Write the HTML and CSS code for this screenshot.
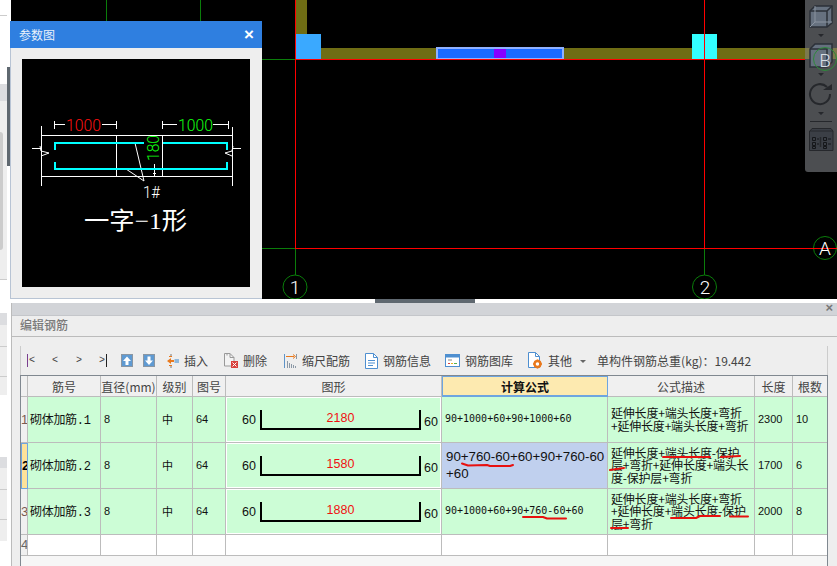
FILE: index.html
```html
<!DOCTYPE html>
<html lang="zh-CN">
<head>
<meta charset="utf-8">
<title>编辑钢筋</title>
<link rel="stylesheet" href="styles.css">
</head>
<body>
<div class="page">
  <aside class="strip">
    <div class="strip-a"></div>
    <div class="strip-b"></div>
    <div class="strip-band"></div>
    <div class="strip-c"><div class="strip-knob"></div></div>
    <div class="strip-d"></div>
    <div class="strip-band2"></div>
    <div class="strip-e"></div>
    <div class="strip-f"></div>
    <div class="strip-g"></div>
    <div class="strip-h"></div>
    <div class="strip-band2 strip-band3"></div>
    <div class="strip-e"></div>
    <div class="strip-f"></div>
    <div class="strip-i"></div>
    <div class="strip-thumb"></div>
  </aside>

  <main class="main">
    <svg class="canvas" viewBox="11 0 826 299" width="826" height="299">
      <rect x="11" y="0" width="826" height="299" fill="#000"/>
      <g stroke="#0a7d0a" fill="none">
        <path d="M106.500 0V21M200.500 0V21M262 59.500H295M262 248.500H295"/>
        <path d="M295.500 249V275M704.500 249V275"/>
        <circle cx="295" cy="287" r="12"/>
        <circle cx="704.500" cy="287" r="12"/>
        <circle cx="825" cy="248" r="11.500"/>
      </g>
      <rect x="296" y="0" width="11" height="34" fill="#6f6d14"/>
      <rect x="321" y="48" width="516" height="11" fill="#6f6d14"/>
      <rect x="296" y="34" width="25" height="25" fill="#3aa9ff"/>
      <rect x="692" y="34" width="25" height="25" fill="#33ffff"/>
      <rect x="437" y="48" width="126" height="11" fill="#1a6aff" stroke="#8fb0ff" stroke-width="2"/>
      <rect x="494" y="49" width="12" height="9" fill="#8800ff"/>
      <path d="M295.500 0V249M704.500 0V249M296 59.500H837M295 248.500H837" stroke="#ff0000" fill="none"/>
      <g class="axis-label" text-anchor="middle">
        <text x="295" y="294">1</text>
        <text x="705" y="294">2</text>
        <text x="825" y="255">A</text>
      </g>
      <path d="M805 0H837V172H808Q805 172 805 169Z" fill="#4c4e51"/>
      <rect x="805" y="48" width="32" height="11" fill="#7c7a4e"/>
      <g stroke="#2b3038" fill="#66717f" stroke-width="1.500">
        <path d="M810 11L815 6H832V23L827 27H810Z"/>
        <path d="M810 11H827V27M827 11L832 6" fill="none"/>
        <path d="M815 6V22H832M815 22L810 27" fill="none" stroke="#8a94a0" stroke-width="1"/>
        <path d="M810 49L815 44H832V62L827 67H810Z"/>
        <path d="M810 49H827V67" fill="none"/>
      </g>
      <g fill="#26282c">
        <path d="M818 34H824L821 37ZM818 73H824L821 76ZM818 112H824L821 115Z"/>
      </g>
      <path d="M830 94A10 10 0 1 1 827 87" fill="none" stroke="#26282c" stroke-width="2"/>
      <path d="M823 90H832V84Z" fill="#26282c"/>
      <path d="M810 121.500H832" stroke="#26282c"/>
      <g stroke="#26282c" fill="none">
        <path d="M810 131L812 128.500H831L833 131V150.500H809.500V131H833" fill="#3b3f46"/>
        <path d="M820.500 137V147" stroke-width="1.500"/>
        <path d="M812.500 137.500h3v3h-3zM812.500 142.500h3v3h-3zM812.500 146.500h3v2h-3zM823.500 137.500h3v3h-3zM823.500 142.500h3v3h-3zM823.500 146.500h3v2h-3zM817 139h2M817 144h2M828 139h3M828 144h3" stroke="#15171a"/>
      </g>
      <circle cx="825" cy="59" r="11.500" fill="none" stroke="#2d8a3a"/>
      <text class="axis-label axis-b" x="825" y="67" text-anchor="middle">B</text>
    </svg>

    <div class="divider"><div class="divider-handle"></div></div>

    <section class="editor">
      <div class="editor-bar"><span class="editor-close">×</span></div>
      <h2 class="editor-title">编辑钢筋</h2>

      <div class="toolbar">
        <div class="nav">
          <span class="nav-btn"><i class="nav-line"></i>&lt;</span>
          <span class="nav-btn">&lt;</span>
          <span class="nav-btn">&gt;</span>
          <span class="nav-btn">&gt;<i class="nav-line nav-line-dark"></i></span>
        </div>
        <svg class="ico-sq ico-up" viewBox="0 0 12 13" width="12" height="13"><rect x=".5" y=".5" width="11" height="12" fill="#5f9ad2" stroke="#8a96a2"/><path d="M6 2.500L10 7H7.500V11H4.500V7H2Z" fill="#fff"/></svg>
        <svg class="ico-sq ico-down" viewBox="0 0 12 13" width="12" height="13"><rect x=".5" y=".5" width="11" height="12" fill="#5f9ad2" stroke="#8a96a2"/><path d="M6 11L10 6.500H7.500V2.500H4.500V6.500H2Z" fill="#fff"/></svg>

        <span class="tool tool-insert">
          <svg viewBox="0 0 13 16" width="13" height="16"><path d="M5 1v3M5 12v3" stroke="#777" fill="none"/><path d="M1 8L5 5V7H8V9H5V11Z" fill="#e9791d"/><path d="M3 3.500H6M3 12.500H6" stroke="#e9791d"/><rect x="8.500" y="6" width="4.500" height="4" fill="#8fb8dc"/></svg>
          插入
        </span>
        <span class="tool tool-delete">
          <svg viewBox="0 0 15 17" width="15" height="17"><path d="M1.500 1.500H7L11 5.500V14H1.500Z" fill="#f3f3f3" stroke="#999"/><path d="M4 3.500V1.500M7 1.500V5.500H11" fill="none" stroke="#999"/><rect x="8" y="9" width="7" height="7" fill="#d9413c"/><path d="M9.500 10.500L13.500 14.500M13.500 10.500L9.500 14.500" stroke="#fff"/></svg>
          删除
        </span>
        <span class="tool tool-scale">
          <svg viewBox="0 0 14 16" width="14" height="16"><path d="M1.500 1V15" stroke="#5e93c8" fill="none"/><path d="M3 3.500H11" stroke="#e9791d"/><path d="M10 1.500L12.500 3.500L10 5.500" fill="none" stroke="#e9791d"/><path d="M13.500 1V6M4.500 8V15M6.500 10V15M8.500 11V15M10.500 12V15M12.500 13V15" stroke="#8b98a6"/></svg>
          缩尺配筋
        </span>
        <span class="tool tool-info">
          <svg viewBox="0 0 13 16" width="13" height="16"><path d="M.5 .500H8.500L12.500 4.500V15.500H.5Z" fill="#fff" stroke="#4e8fd0"/><path d="M8.500 .500V4.500H12.500M3 7.500H10M3 10H10M3 12.500H8" fill="none" stroke="#4e8fd0"/></svg>
          钢筋信息
        </span>
        <span class="tool tool-lib">
          <svg viewBox="0 0 15 13" width="15" height="13"><rect x=".5" y=".5" width="14" height="12" fill="#fff" stroke="#4e8fd0"/><rect x="1" y="1" width="13" height="2.500" fill="#4e8fd0"/><path d="M3 6H7" stroke="#888"/><path d="M3 9.500H5" stroke="#d9413c"/><path d="M6 9.500H8" stroke="#e9b21d"/><path d="M9 9.500H12" stroke="#57b04f"/></svg>
          钢筋图库
        </span>
        <span class="tool tool-other">
          <svg viewBox="0 0 15 17" width="15" height="17"><path d="M.5 .500H7.500L11.500 4.500V15.500H.5Z" fill="#fff" stroke="#4e8fd0"/><path d="M7.500 .500V4.500H11.500" fill="none" stroke="#4e8fd0"/><circle cx="9.500" cy="12" r="3" fill="none" stroke="#e9791d" stroke-width="2.400"/><path d="M9.500 7.500V16.500M5 12H14M6.500 9L12.500 15M12.500 9L6.500 15" stroke="#e9791d" stroke-dasharray="1.500 6" stroke-width="1.500"/></svg>
          其他
        </span>
        <span class="caret"></span>
        <span class="total">单构件钢筋总重(kg)：19.442</span>
      </div>

      <div class="grid-wrap">
        <table class="grid">
          <colgroup>
            <col class="c-idx"><col class="c-name"><col class="c-dia"><col class="c-grade"><col class="c-code"><col class="c-shape"><col class="c-calc"><col class="c-desc"><col class="c-len"><col class="c-num">
          </colgroup>
          <thead>
            <tr class="r-head">
              <th></th><th>筋号</th><th>直径(mm)</th><th>级别</th><th>图号</th><th>图形</th><th class="th-active">计算公式</th><th>公式描述</th><th>长度</th><th class="last">根数</th>
            </tr>
          </thead>
          <tbody>
            <tr class="r-data">
              <td class="idx">1</td><td class="name">砌体加筋.1</td><td class="num">8</td><td class="grade">中</td><td class="num">64</td>
              <td class="shape-cell"><div class="shape"><span class="s-end">60</span><div class="s-bar">2180</div><span class="s-end s-end-r">60</span></div></td>
              <td class="calc">90+1000+60+90+1000+60</td>
              <td class="desc">延伸长度+端头长度+弯折<br>+延伸长度+端头长度+弯折</td>
              <td class="num">2300</td><td class="num last">10</td>
            </tr>
            <tr class="r-data">
              <td class="idx idx-active">2</td><td class="name">砌体加筋.2</td><td class="num">8</td><td class="grade">中</td><td class="num">64</td>
              <td class="shape-cell"><div class="shape"><span class="s-end">60</span><div class="s-bar">1580</div><span class="s-end s-end-r">60</span></div></td>
              <td class="calc calc-active">90+760-60+60+90+760-60<br>+60</td>
              <td class="desc">延伸长度+端头长度-保护<br>层+弯折+延伸长度+端头长<br>度-保护层+弯折</td>
              <td class="num">1700</td><td class="num last">6</td>
            </tr>
            <tr class="r-data">
              <td class="idx">3</td><td class="name">砌体加筋.3</td><td class="num">8</td><td class="grade">中</td><td class="num">64</td>
              <td class="shape-cell"><div class="shape"><span class="s-end">60</span><div class="s-bar">1880</div><span class="s-end s-end-r">60</span></div></td>
              <td class="calc">90+1000+60+90+760-60+60</td>
              <td class="desc">延伸长度+端头长度+弯折<br>+延伸长度+端头长度-保护<br>层+弯折</td>
              <td class="num">2000</td><td class="num last">8</td>
            </tr>
            <tr class="r-empty">
              <td class="idx">4</td><td></td><td></td><td></td><td></td><td></td><td></td><td></td><td></td><td class="last"></td>
            </tr>
          </tbody>
        </table>
      </div>
    </section>
  </main>

  <div class="param">
    <div class="param-head"><span>参数图</span><span class="param-close">×</span></div>
    <div class="param-body">
      <svg viewBox="22 59 228 228" width="228" height="228">
        <rect x="22" y="59" width="228" height="228" fill="#000"/>
        <g stroke="#fff" fill="none">
          <path d="M54.500 121V129M54.500 124.500H65M102 124.500H116.500M116.500 121V129M162.500 121V129M162.500 124.500H177M213 124.500H228.500M228.500 121V129"/>
          <path d="M41.500 126V186M232.500 127V186M41 135.500H233M41 176.500H233M116.500 135V176M162.500 135V176"/>
          <path d="M154.500 164V176M153 173.500H156"/>
          <path d="M135 143L144 181L126 169"/>
          <path d="M32 148.500H40M40 146L41 151L49 153L41 156"/>
          <path d="M241 148.500H233M233 146L232 151L225 153L232 156"/>
        </g>
        <path d="M55 150V143H144M163 143H227V150M55 162V169H227V162" fill="none" stroke="#00ffff" stroke-width="2"/>
        <g class="dim-text">
          <text x="66" y="131" fill="#ff1010" textLength="35" lengthAdjust="spacingAndGlyphs">1000</text>
          <text x="178" y="131" fill="#10ff10" textLength="35" lengthAdjust="spacingAndGlyphs">1000</text>
          <text transform="translate(159 161) rotate(-90)" fill="#10ff10" textLength="26" lengthAdjust="spacingAndGlyphs">180</text>
          <text x="143" y="198" fill="#fff" textLength="17" lengthAdjust="spacingAndGlyphs">1#</text>
        </g>
        <text class="shape-name" x="84" y="229" textLength="103" lengthAdjust="spacingAndGlyphs">一字−1形</text>
      </svg>
    </div>
  </div>

  <svg class="marks" viewBox="0 0 837 566" width="837" height="566">
    <g fill="none" stroke="#e8100f" stroke-width="2" stroke-linecap="round" stroke-linejoin="round">
      <path d="M462 463.500L468 465.500L487 465L490 466L510 466L513 465"/>
      <path d="M663 457H710M721 457L740 456M610 470L624 468"/>
      <path d="M523 517H543L547 518.500H566"/>
      <path d="M671 518H696L700 516H720M730 516.500L748 516.500M611 528H628"/>
    </g>
  </svg>
</div>
</body>
</html>
```

FILE: styles.css
```css
* { box-sizing: border-box; }
html, body { margin: 0; padding: 0; background: #fff; }
.page {
  position: relative;
  display: flex;
  width: 837px;
  height: 566px;
  overflow: hidden;
  font-family: "Noto Sans CJK SC", "Liberation Sans", sans-serif;
  font-size: 12px;
  color: #333;
}

/* left edge strip */
.strip { position: relative; flex: 0 0 11px; width: 11px; height: 566px; background: #fff; }
.strip-a { width: 7px; height: 16px; border-bottom: 1px solid #ccc; }
.strip-b { width: 7px; height: 68px; }
.strip-band { width: 7px; height: 17px; background: #dcdde0; }
.strip-c { width: 7px; height: 179px; padding-top: 31px; background: #eee; border-bottom: 1px solid #ccc; }
.strip-knob { width: 3px; height: 118px; background: #ccc; border-radius: 0 3px 3px 0; }
.strip-d { width: 7px; height: 33px; }
.strip-band2 { width: 7px; height: 12px; background: #dcdde0; }
.strip-band3 { height: 11px; }
.strip-e { width: 7px; height: 22px; background: #eee; border-bottom: 1px solid #ccc; }
.strip-f { width: 7px; height: 30px; background: #eee; border-bottom: 1px solid #ccc; }
.strip-g { width: 7px; height: 18px; background: #eee; }
.strip-h { width: 7px; height: 62px; }
.strip-i { width: 7px; height: 21px; background: #eee; }
.strip-thumb { position: absolute; left: 7px; top: 67px; width: 3px; height: 99px; background: #5f6870; }

.main { flex: 0 0 826px; width: 826px; display: flex; flex-direction: column; }
.canvas { display: block; flex: none; }
.axis-label { font-family: "Roboto", "Liberation Sans", sans-serif; font-weight: 300; font-size: 19px; fill: #fff; }
.axis-b { fill: #d8dde4; }

.divider { flex: none; height: 4px; background: #fff; }
.divider-handle { width: 100px; height: 4px; margin-left: 364px; background: #5f6870; }

/* bottom editor */
.editor { flex: 1; border-left: 1px solid #bbb; background: #eee; min-height: 0; }
.editor-bar { position: relative; height: 12px; background: #d2d4d8; }
.editor-close {
  position: absolute; right: 4px; top: -3px;
  font: bold 13px/15px "Liberation Sans", sans-serif; color: #777;
}
.editor-title {
  margin: 0; height: 22px; padding-left: 8px;
  font-size: 12px; font-weight: 500; line-height: 18px; color: #7a7a7a;
  border-top: 1px solid #c4c6ca; border-bottom: 1px solid #bbb;
}

.toolbar {
  display: flex; align-items: center;
  height: 29px; margin: 9px 9px 0 8px; padding-left: 5px;
  border-left: 1px solid #ccc; border-right: 1px solid #ccc;
  white-space: nowrap;
}
.nav { display: flex; gap: 14px; margin-right: 13px; }
.nav-btn {
  display: flex; align-items: center; justify-content: center; gap: 1px;
  width: 10px; height: 14px;
  font: 10px/14px "Liberation Mono", monospace; color: #444;
}
.nav-line { display: block; flex: none; width: 1px; height: 13px; background: #7b3f8f; }
.nav-line-dark { background: #222; }
.ico-sq { flex: none; }
.ico-up { margin-right: 10px; }
.ico-down { margin-right: 11px; }
.tool { display: flex; align-items: center; gap: 5px; color: #444; }
.tool svg { flex: none; }
.tool-insert { margin-right: 15px; }
.tool-delete { margin-right: 16px; }
.tool-scale { margin-right: 15px; }
.tool-info { margin-right: 14px; }
.tool-lib { margin-right: 15px; }
.tool-other { margin-right: 8px; }
.caret {
  width: 0; height: 0; margin: 1px 11px 0 0;
  border: 3px solid transparent; border-top: 3px solid #666; border-bottom: 0;
}
.total { color: #444; }

/* table */
.grid-wrap {
  margin: 0 0 0 8px;
  width: 808px; height: 191px;
  background: #f6f6f6;
  border-top: 1px solid #808890;
  border-left: 1px solid #808890;
  border-right: 1px solid #808890;
}
.grid { width: 806px; table-layout: fixed; border-collapse: separate; border-spacing: 0; }
.c-idx { width: 7px; } .c-name { width: 73px; } .c-dia { width: 56px; } .c-grade { width: 36px; }
.c-code { width: 33px; } .c-shape { width: 216px; } .c-calc { width: 166px; } .c-desc { width: 147px; }
.c-len { width: 38px; } .c-num { width: 34px; }
.grid th, .grid td {
  padding: 0; border-right: 1px solid #bcbcbc; border-bottom: 1px solid #bcbcbc; overflow: hidden;
}
.grid .last { border-right: 0; }
.grid th { font-size: 12px; font-weight: 400; color: #444; background: #f0f0f0; white-space: nowrap; }
.r-head { height: 21px; }
.r-data { height: 46px; }
.r-empty { height: 21px; }
.r-empty td { background: #fff; }
.grid .th-active {
  font-weight: 700; color: #111; background: #fdeab0;
  border: 1px solid #6ea5e0; border-bottom-width: 2px;
}
.r-data td { background: #ccfdd6; color: #111; }
.grid .idx { background: #f0f0f0; color: #7a5a50; font: 13px/14px "Liberation Sans", sans-serif; text-align: left; }
.r-empty .idx { color: #666; }
.grid .idx-active {
  background: #fde29a; color: #000; font-weight: 700;
  border: 1px solid #6ea5e0;
}
.grid .name { padding: 0 0 1px 2px; font: 12px "Liberation Mono", "Noto Sans CJK SC", monospace; letter-spacing: -.3px; white-space: nowrap; }
.grid .num { padding: 0 0 1px 3px; font: 11px "Liberation Sans", sans-serif; }
.grid .grade { padding: 0 0 1px 5px; font-size: 11px; }
.grid .calc {
  padding: 0 0 1px 3px; font: 10px/14px "DejaVu Sans Mono", monospace; white-space: nowrap;
}
.grid .calc-active {
  background: #c0d0ee; font: 13.3px/17px "Liberation Sans", sans-serif; padding-left: 4px; color: #111;
}
.grid .desc { padding-left: 3px; font-size: 12px; line-height: 12.500px; white-space: nowrap; letter-spacing: -.2px; }
.grid .shape-cell { padding: 1px; background: #fff; }
.shape {
  display: flex; align-items: center;
  height: 43px; padding-left: 15px; background: #ccfdd6;
  font: 12.500px "Liberation Sans", sans-serif; color: #111;
}
.s-end { width: 18px; }
.s-end-r { padding: 4px 0 0 3px; }
.s-bar {
  width: 161px; height: 20px; margin-top: 1px;
  border: 2px solid #000; border-top: 0;
  color: #f01010; text-align: center; line-height: 17px; font-size: 12.500px;
}

/* floating parameter window */
.param {
  position: absolute; left: 10px; top: 21px;
  width: 252px; height: 278px;
  background: #eee;
  border-left: 1px solid #b8c4d4; border-bottom: 1px solid #b8c4d4;
}
.param-head {
  display: flex; justify-content: space-between; align-items: center;
  height: 27px; padding: 0 8px 0 9px; margin-left: -1px;
  background: #2f7fe0; color: #e8f0fa; font-size: 12px;
}
.param-close { font: bold 17px/17px "Liberation Sans", sans-serif; color: #fff; }
.param-body { padding: 11px 11px 0 11px; }
.param-body svg { display: block; }
.dim-text { font-family: "Roboto", "Liberation Sans", sans-serif; font-weight: 300; font-size: 16px; }
.shape-name { font-family: "Liberation Serif", "Noto Sans CJK SC", serif; font-weight: 400; font-size: 24px; fill: #fff; }

/* hand-drawn marks over the table */
.marks { position: absolute; left: 0; top: 0; pointer-events: none; }
```
